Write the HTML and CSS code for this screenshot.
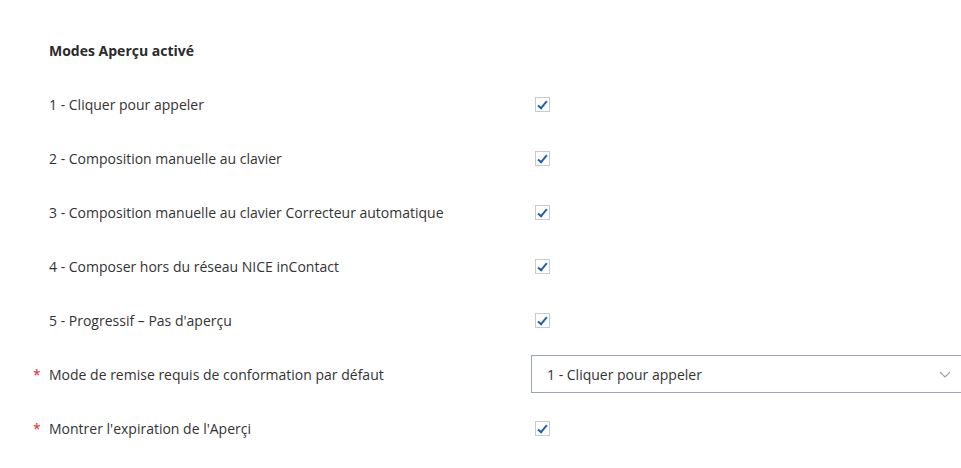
FILE: index.html
```html
<!DOCTYPE html>
<html lang="fr">
    <head>
        <meta charset="utf-8">
        <meta name="viewport" content="width=device-width, initial-scale=1.0">
        <title>Modes Aperçu</title>
        <link rel="stylesheet" href="styles.css">
    </head>
    <body>
        <div class="settings">
            <div class="row">
                <h3 class="section-title">Modes Aperçu activé</h3>
            </div>
            <div class="row">
                <span class="label">1 - Cliquer pour appeler</span>
                <span class="control"><span class="check"></span></span>
            </div>
            <div class="row">
                <span class="label">2 - Composition manuelle au clavier</span>
                <span class="control"><span class="check"></span></span>
            </div>
            <div class="row">
                <span class="label">3 - Composition manuelle au clavier Correcteur automatique</span>
                <span class="control"><span class="check"></span></span>
            </div>
            <div class="row">
                <span class="label">4 - Composer hors du réseau NICE inContact</span>
                <span class="control"><span class="check"></span></span>
            </div>
            <div class="row">
                <span class="label">5 - Progressif – Pas d'aperçu</span>
                <span class="control"><span class="check"></span></span>
            </div>
            <div class="row">
                <span class="label"><span class="req">*</span>Mode de remise requis de conformation par défaut</span>
                <span class="control">
                    <span class="select">
                        <span>1 - Cliquer pour appeler</span>
                        <svg class="chevron" width="12" height="7" viewBox="0 0 12 7"><path d="M1 1 L6 6 L11 1" fill="none" stroke="#9aa3ad" stroke-width="1.2"/></svg>
                    </span>
                </span>
            </div>
            <div class="row">
                <span class="label"><span class="req">*</span>Montrer l'expiration de l'Aperçi</span>
                <span class="control"><span class="check"></span></span>
            </div>
        </div>
    </body>
</html>
```

FILE: styles.css
```css
body{
    margin: 0;
    background-color: #ffffff;
    font-family: "Open Sans", Arial, sans-serif;
    font-size: 14px;
    color: #333333;
}
.settings{
    padding-top: 23px;
    padding-left: 49px;
}
.row{
    display: flex;
    align-items: center;
    height: 54px;
}
.section-title{
    margin: 0;
    font-size: 14px;
    font-weight: 700;
    color: #2b2b2b;
}
.label{
    width: 482px;
    flex-shrink: 0;
}
.req{
    display: inline-block;
    width: 16px;
    margin-left: -16px;
    color: #e0262f;
}
.control{
    flex: 1;
    display: flex;
    align-items: center;
}
/* checked box with a blue tick */
.check{
    position: relative;
    width: 13px;
    height: 13px;
    margin-left: 4px;
    border: 1px solid #c3ccd5;
    background-color: #ffffff;
}
.check::after{
    content: "";
    position: absolute;
    left: 4px;
    top: 1px;
    width: 3px;
    height: 8px;
    border-right: 2px solid #1f5fb0;
    border-bottom: 2px solid #1f5fb0;
    transform: rotate(40deg);
}
.select{
    display: flex;
    align-items: center;
    justify-content: space-between;
    width: 440px;
    height: 38px;
    padding: 0 5px 0 15px;
    border: 1px solid #9aa5b1;
    box-sizing: border-box;
    margin-right: -20px;
    color: #333333;
}
.chevron{
    margin-right: 14px;
}
```
